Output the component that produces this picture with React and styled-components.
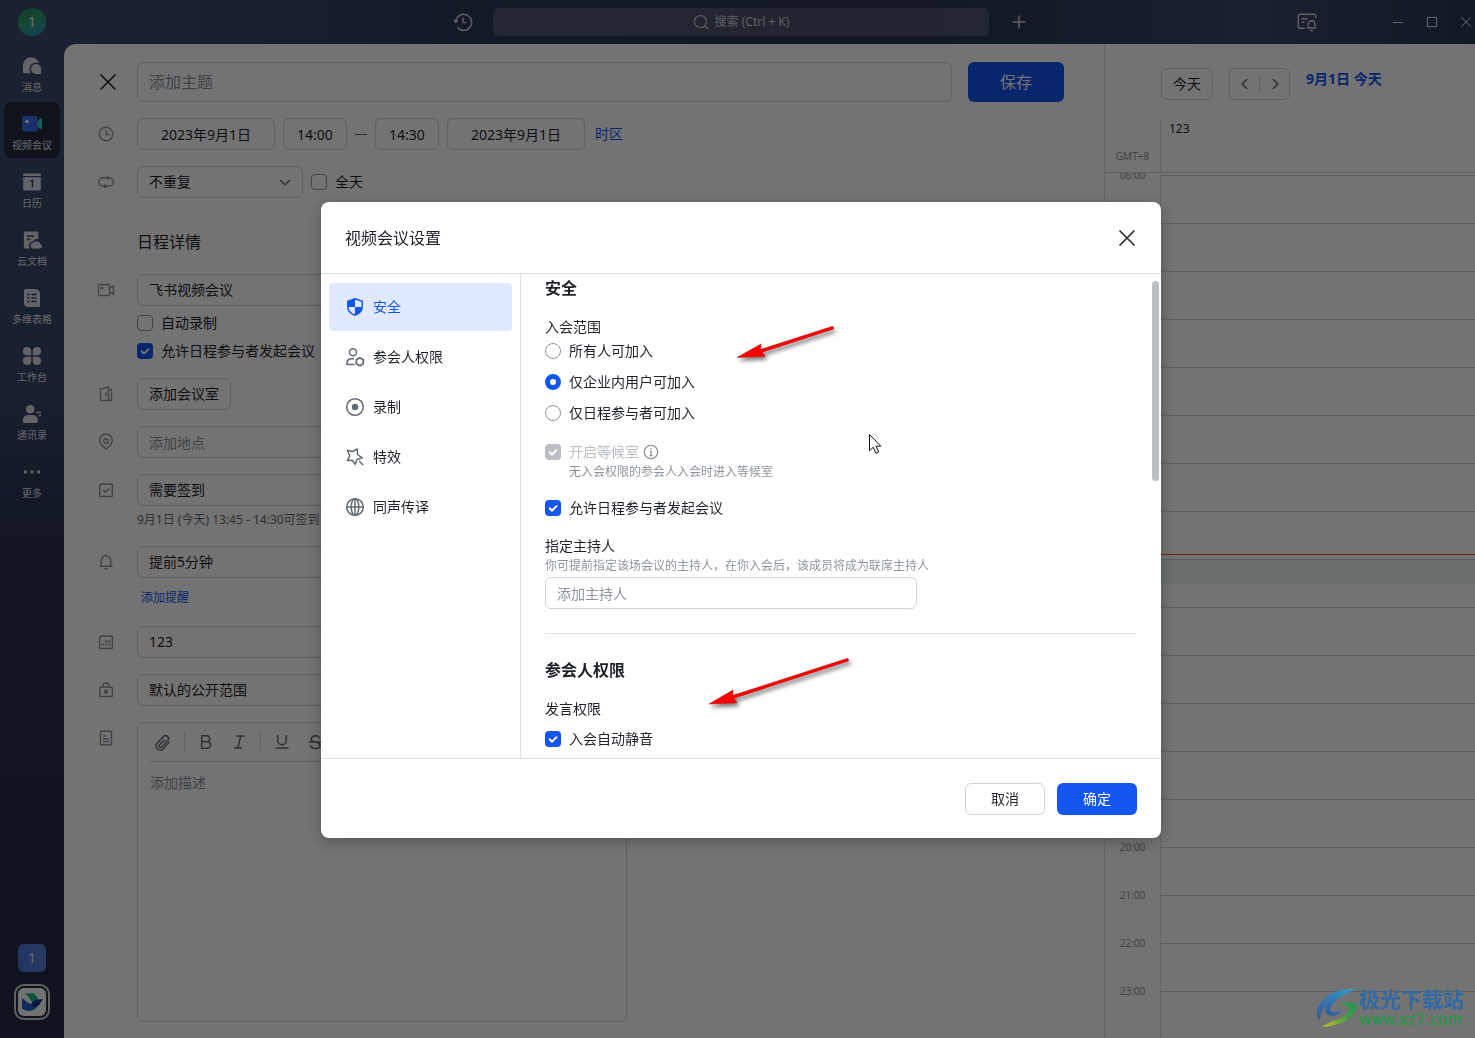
import React from "react";
import styled, { createGlobalStyle, css } from "styled-components";

const GlobalStyle = createGlobalStyle`
  * {
    box-sizing: border-box;
  }
  body {
    margin: 0;
    overflow: hidden;
  }
  body, button, input, select, textarea {
    font-family: "Noto Sans", "Noto Sans CJK SC", sans-serif;
    font-size: 14px;
    line-height: 22px;
    color: #1f2329;
  }
  button {
    padding: 0;
    border: none;
    background: none;
  }
  svg {
    display: block;
    flex: none;
  }
`;

const CHECK = `url("data:image/svg+xml,%3Csvg xmlns='http://www.w3.org/2000/svg' viewBox='0 0 16 16' fill='none' stroke='white' stroke-width='2'%3E%3Cpath d='M4.2 7.8l2.8 2.8 5-5'/%3E%3C/svg%3E")`;

/* shell */

const Shell = styled.div`
  height: 100vh;
  display: flex;
  flex-direction: column;
  background: #26314f;
`;

const Header = styled.header`
  height: 44px;
  flex: none;
  display: grid;
  grid-template-columns: 1fr minmax(0, 496px) 1fr;
  align-items: center;
  padding-left: 7px;
  background: linear-gradient(90deg, #3c4b6f 0%, #354465 20%, #2c3954 33%, #2a3550 62%, #3b4869 85%, #2b3652 100%);
`;

const HeaderLeft = styled.div`
  display: flex;
  align-items: center;
  justify-content: space-between;
  padding: 0 20px 0 11px;
`;

const HeaderRight = styled.div`
  display: flex;
  align-items: center;
  justify-content: space-between;
  padding: 0 1px 0 20px;
`;

const WindowTools = styled.div`
  display: flex;
  align-items: center;
  gap: 18px;
`;

const NoticeButton = styled.button`
  margin-right: 55px;
`;

const Avatar = styled.div`
  width: 28px;
  height: 28px;
  border-radius: 50%;
  display: flex;
  align-items: center;
  justify-content: center;
  color: #f0f2f5;
  background: linear-gradient(150deg, #2a8c4a 0%, #2f9f7a 50%, #2c90c4 100%);
`;

const SearchButton = styled.button`
  height: 28px;
  display: flex;
  align-items: center;
  justify-content: center;
  gap: 6px;
  border-radius: 6px;
  font-size: 12px;
  color: #cfd3db;
  background: rgba(255, 255, 255, 0.15);
`;

const Main = styled.div`
  flex: 1;
  min-height: 0;
  display: flex;
  background: linear-gradient(180deg, #3c4b6f 0%, #364566 35%, #27324c 50%, #222b43 100%);
`;

const SideBar = styled.nav`
  width: 64px;
  flex: none;
  display: flex;
  flex-direction: column;
  align-items: center;
  gap: 2px;
  padding-bottom: 18px;
`;

const SideItem = styled.button`
  width: 56px;
  height: 56px;
  flex: none;
  display: flex;
  flex-direction: column;
  align-items: center;
  gap: 4px;
  padding-top: 12px;
  border-radius: 8px;
  font-size: 10px;
  line-height: 14px;
  color: #e1e4eb;
  background: ${(props) => (props.$active ? "#242b3f" : "transparent")};
`;

const SideBottom = styled.div`
  margin-top: auto;
  display: flex;
  flex-direction: column;
  align-items: center;
  gap: 12px;
`;

const Tenant = styled.div`
  width: 28px;
  height: 28px;
  border-radius: 6px;
  display: flex;
  align-items: center;
  justify-content: center;
  color: #e8edf8;
  background: linear-gradient(90deg, #4a76dc, #5c83d8);
`;

const AppLogo = styled.div`
  width: 36px;
  height: 36px;
  padding: 2px;
  border: 2px solid #d5d7dc;
  border-radius: 10px;
`;

const LogoFace = styled.div`
  height: 28px;
  border-radius: 6px;
  background: #fafafa;
`;

const Page = styled.main`
  flex: 1;
  min-width: 0;
  display: flex;
  overflow: hidden;
  border-radius: 12px 0 0 0;
  background: #fff;
`;

/* event form */

const Form = styled.form`
  flex: 1;
  min-width: 0;
  display: flex;
  flex-direction: column;
  gap: 16px;
  padding: 18px 40px 16px 32px;
`;

const Row = styled.div`
  display: grid;
  grid-template-columns: 41px minmax(0, 1fr);
  ${(props) => props.$grow && "flex: 1; min-height: 0;"}
`;

const RowIcon = styled.div`
  height: ${(props) => (props.$tall ? "40px" : "32px")};
  display: flex;
  align-items: center;
  color: #8f959e;
`;

const Line = styled.div`
  display: flex;
  align-items: center;
  gap: ${(props) => props.$gap || "8px"};
`;

const Stack = styled.div`
  display: flex;
  flex-direction: column;
  align-items: flex-start;
  max-width: 490px;
`;

const boxStyle = css`
  height: 32px;
  border: 1px solid #d0d3d6;
  border-radius: 6px;
  background: #fff;
  padding: 0 11px;
  outline: none;
  &::placeholder {
    color: #8f959e;
  }
`;

const TextInput = styled.input`
  ${boxStyle}
  width: ${(props) => props.$width || "100%"};
`;

const CenterInput = styled(TextInput)`
  padding: 0;
  text-align: center;
`;

const TitleInput = styled(TextInput)`
  flex: 1;
  height: 40px;
  font-size: 16px;
`;

const SelectBox = styled.div`
  width: ${(props) => props.$width || "100%"};
  display: grid;
  align-items: center;
  & > * {
    grid-area: 1 / 1;
  }
  svg {
    justify-self: end;
    margin-right: 10px;
    color: #646a73;
    pointer-events: none;
  }
`;

const NativeSelect = styled.select`
  ${boxStyle}
  width: 100%;
  appearance: none;
`;

const OutlineButton = styled.button`
  ${boxStyle}
  ${(props) => props.$width && `width: ${props.$width}; padding: 0;`}
`;

const PrimaryButton = styled.button`
  width: ${(props) => (props.$large ? "96px" : "80px")};
  height: ${(props) => (props.$large ? "40px" : "32px")};
  border-radius: 6px;
  font-size: ${(props) => (props.$large ? "16px" : "14px")};
  color: #fff;
  background: #1456f0;
`;

const TextLink = styled.a`
  display: block;
  padding-left: 2px;
  font-size: ${(props) => (props.$small ? "12px" : "14px")};
  color: #1456f0;
  text-decoration: none;
`;

const SectionTitle = styled.h2`
  margin: 16px 0 4px 41px;
  font-size: 16px;
  line-height: 24px;
  font-weight: 400;
`;

const Dash = styled.span`
  width: 12px;
  height: 1px;
  background: #646a73;
`;

const Label = styled.label`
  display: flex;
  align-items: center;
  gap: 8px;
  color: ${(props) => (props.$muted ? "#bbbfc4" : "#1f2329")};
`;

const CheckInput = styled.input.attrs({ type: "checkbox" })`
  appearance: none;
  width: 16px;
  height: 16px;
  flex: none;
  margin: 0;
  border: 1px solid #8f959e;
  border-radius: 4px;
  background: #fff;
  &:checked {
    border: none;
    background: #1456f0 ${CHECK};
  }
  &:checked:disabled {
    background: #bbbfc4 ${CHECK};
  }
`;

const RadioInput = styled.input.attrs({ type: "radio" })`
  appearance: none;
  width: 16px;
  height: 16px;
  flex: none;
  margin: 0;
  border: 1px solid #8f959e;
  border-radius: 50%;
  background: #fff;
  &:checked {
    border: 5px solid #1456f0;
  }
`;

const FieldChecks = styled.div`
  display: flex;
  flex-direction: column;
  gap: 6px;
  margin-top: 6px;
`;

const FieldHint = styled.p`
  margin: 4px 0 0;
  font-size: 12px;
  line-height: 20px;
  white-space: nowrap;
  color: #646a73;
`;

const FieldExtra = styled.div`
  padding: 8px 0 0 2px;
  line-height: 24px;
`;

const Editor = styled.div`
  max-width: 490px;
  display: flex;
  flex-direction: column;
  border: 1px solid #d0d3d6;
  border-radius: 6px;
  padding: 0 12px;
`;

const EditorTools = styled.div`
  height: 39px;
  flex: none;
  display: flex;
  align-items: center;
  gap: 9px;
  padding-left: 1px;
  color: #646a73;
  border-bottom: 1px solid #d0d3d6;
`;

const ToolButton = styled.button`
  width: 24px;
  height: 24px;
  display: flex;
  align-items: center;
  justify-content: center;
  color: inherit;
`;

const Divider = styled.span`
  width: 1px;
  height: 18px;
  background: #d0d3d6;
`;

const EditorText = styled.textarea`
  flex: 1;
  padding: 10px 0;
  border: none;
  outline: none;
  resize: none;
  background: none;
  &::placeholder {
    color: #8f959e;
  }
`;

/* calendar */

const Calendar = styled.aside`
  width: 371px;
  flex: none;
  display: flex;
  flex-direction: column;
  border-left: 1px solid #dee0e3;
`;

const CalendarHead = styled.div`
  display: flex;
  gap: 16px;
  padding: 24px 0 18px 56px;
`;

const Pager = styled.div`
  width: 61px;
  height: 32px;
  display: flex;
  align-items: center;
  justify-content: space-evenly;
  border: 1px solid #d0d3d6;
  border-radius: 6px;
  button {
    color: #646a73;
  }
`;

const CalendarDate = styled.strong`
  color: #1456f0;
`;

const DayHead = styled.div`
  height: 55px;
  flex: none;
  display: grid;
  grid-template-columns: 55px 1fr;
  border-bottom: 1px solid #d0d3d6;
`;

const Zone = styled.span`
  align-self: end;
  padding-bottom: 8px;
  font-size: 10px;
  line-height: 16px;
  text-align: center;
  color: #8f959e;
`;

const DayName = styled.span`
  padding-left: 8px;
  font-size: 12px;
  border-left: 1px solid #dee0e3;
`;

const Hours = styled.div`
  flex: 1;
  min-height: 0;
  overflow: hidden;
`;

const Hour = styled.div`
  height: 48px;
  display: grid;
  grid-template-columns: 55px 1fr;
  &:first-child {
    height: 50px;
    padding-top: 2px;
  }
`;

const HourLabel = styled.span`
  margin-top: -8px;
  font-size: 10px;
  line-height: 16px;
  text-align: center;
  color: #8f959e;
`;

const HourCell = styled.div`
  position: relative;
  border-top: 1px solid #d0d3d6;
  border-left: 1px solid #dee0e3;
`;

const NowLine = styled.div`
  position: absolute;
  top: 42px;
  left: 0;
  right: 0;
  height: 1px;
  background: #f54a45;
`;

const Slot = styled.div`
  height: 24px;
  background: #ebf3ef;
`;

/* dialog */

const Mask = styled.div`
  position: fixed;
  inset: 0;
  display: flex;
  align-items: center;
  justify-content: center;
  padding: 2px 0 0 7px;
  background: rgba(0, 0, 0, 0.55);
`;

const Dialog = styled.section`
  position: relative;
  width: 840px;
  border-radius: 8px;
  background: #fff;
  box-shadow: 0 4px 16px rgba(0, 0, 0, 0.25);
`;

const DialogHead = styled.div`
  height: 72px;
  display: flex;
  align-items: center;
  justify-content: space-between;
  padding: 0 24px;
  border-bottom: 1px solid #dee0e3;
`;

const DialogTitle = styled.h1`
  margin: 0;
  font-size: 16px;
  line-height: 24px;
  font-weight: 400;
`;

const DialogBody = styled.div`
  height: 484px;
  display: flex;
`;

const Tabs = styled.nav`
  width: 200px;
  flex: none;
  display: flex;
  flex-direction: column;
  gap: 2px;
  padding: 9px 8px;
  border-right: 1px solid #dee0e3;
`;

const Tab = styled.button`
  height: 48px;
  display: flex;
  align-items: center;
  gap: 8px;
  padding-left: 16px;
  border-radius: 4px;
  color: ${(props) => (props.$active ? "#1456f0" : "#1f2329")};
  background: ${(props) => (props.$active ? "#e0e9ff" : "transparent")};
  svg {
    color: ${(props) => (props.$active ? "#1456f0" : "#646a73")};
  }
`;

const Settings = styled.div`
  position: relative;
  flex: 1;
  min-width: 0;
  overflow: hidden;
  padding: 2px 24px 0;
`;

const Group = styled.div`
  display: flex;
  flex-direction: column;
  gap: ${(props) => props.$gap || "0"};
  margin-top: ${(props) => props.$top || "16px"};
`;

const GroupTitle = styled.h2`
  margin: 0;
  font-size: 16px;
  line-height: 24px;
  font-weight: 700;
`;

const FieldName = styled.div`
  line-height: 22px;
`;

const Note = styled.p`
  margin: 0;
  padding-left: ${(props) => (props.$indent ? "24px" : "0")};
  font-size: 12px;
  line-height: 18px;
  color: #8f959e;
`;

const HostField = styled.div`
  padding: 2px 0 24px;
  margin-bottom: 24px;
  border-bottom: 1px solid #dee0e3;
`;

const ScrollThumb = styled.div`
  position: absolute;
  top: 7px;
  right: 2px;
  width: 7px;
  height: 200px;
  border-radius: 4px;
  background: #bbbfc4;
`;

const DialogFoot = styled.div`
  display: flex;
  justify-content: flex-end;
  gap: 12px;
  padding: 24px 24px 23px;
  border-top: 1px solid #dee0e3;
`;

const Marks = styled.svg`
  position: absolute;
  left: 380px;
  top: 116px;
  pointer-events: none;
`;

const Watermark = styled.div`
  position: fixed;
  right: 11px;
  bottom: 8px;
  display: flex;
  align-items: center;
`;

const WatermarkText = styled.div`
  display: flex;
  flex-direction: column;
`;

const WatermarkName = styled.span`
  font-size: 21px;
  line-height: 22px;
  font-weight: 700;
  color: #3069a3;
`;

const WatermarkSite = styled.span`
  font-family: "DejaVu Sans", sans-serif;
  font-size: 15px;
  line-height: 20px;
  color: #2f9450;
  text-shadow: 0 0 1px #2f9450;
`;

/* icons, all drawn on a 20px grid */

const Icon = ({ size = 20, width = 1.4, children }) => (
  <svg width={size} height={size} viewBox="0 0 20 20" fill="none" stroke="currentColor" strokeWidth={width}>
    {children}
  </svg>
);

const CloseIcon = ({ size = 20 }) => (
  <svg width={size} height={size} viewBox={`0 0 ${size} ${size}`} stroke="#2b2f36" strokeWidth="1.7">
    <path d={`M${size / 2 - 7.5} ${size / 2 - 7.5}l15 15m0-15l-15 15`} />
  </svg>
);

const sideItems = [
  {
    name: "消息",
    icon: (
      <>
        <path d="M1 9a8 8 0 1 1 8 8.200H2q-1 0-1-1Z" />
        <path d="M14 7.200a5.800 5.800 0 0 1 5.800 5.800v4.800q0 1-1 1H14a5.800 5.800 0 0 1 0-11.600Z" stroke="#394869" strokeWidth="1.600" />
      </>
    ),
  },
  {
    name: "视频会议",
    active: true,
    icon: (
      <>
        <rect x="0" y="2" width="15.5" height="15.5" rx="2" fill="#3b6cf0" />
        <circle cx="5" cy="7.5" r="1.8" fill="#fff" />
        <path d="M15.3 7.2 18 4.5q2-.6 2 1v8.600q0 1.600-2 1l-2.700-2.700Z" fill="#35d2bd" />
      </>
    ),
  },
  {
    name: "日历",
    icon: (
      <>
        <path d="M2 1.500h16q.8 0 .8.800V4H1.200V2.300q0-.8.800-.8ZM1.200 5.200h17.600v12q0 1.300-1.300 1.300h-15q-1.300 0-1.300-1.300Z" />
        <path d="M8.500 9.500 10.500 8.300V15.500" stroke="#33405f" strokeWidth="1.500" fill="none" />
      </>
    ),
  },
  {
    name: "云文档",
    icon: (
      <>
        <path d="M3.200 1.500h12q1.300 0 1.300 1.300v6q-3.500-.8-5.500 2.700-4 .3-4 4 0 2 1 3H3.200q-1.300 0-1.300-1.300V2.800q0-1.300 1.300-1.300Z" />
        <path d="M5 6h7M5 9.500h3.500" stroke="#33405f" strokeWidth="1.500" />
        <path d="M11.500 18.500a3 3 0 0 1 .3-6 3.700 3.700 0 0 1 6.400 1.500 2.300 2.300 0 0 1 0 4.500Z" />
      </>
    ),
  },
  {
    name: "多维表格",
    icon: (
      <>
        <path d="M3.500 1h9.500q5 .5 5 5v11.500q0 1.500-1.500 1.500H6q-4-.3-4-4V2.500Q2 1 3.500 1Z" />
        <path d="M5.200 6.500h2.300M9.500 6.500h5M5.200 10h2.300M9.500 10h5M5.200 13.500h2.300M9.500 13.500h5" stroke="#33405f" strokeWidth="1.600" />
      </>
    ),
  },
  {
    name: "工作台",
    icon: (
      <>
        <path d="M5 1a4 4 0 0 1 4.200 4v4.200H5A4.100 4.100 0 0 1 5 1ZM15 1a4.100 4.100 0 0 1 0 8.200h-4.200V5A4 4 0 0 1 15 1ZM5 10.800h4.200V15A4.100 4.100 0 1 1 5 10.800ZM10.800 10.800H15A4.100 4.100 0 1 1 10.800 15Z" />
      </>
    ),
  },
  {
    name: "通讯录",
    icon: (
      <>
        <circle cx="8.300" cy="5.300" r="4.300" />
        <path d="M.8 17.500q0-6.500 5-6.500h5q5 0 5 6.500 0 1.500-1.500 1.500h-12Q.8 19 .8 17.500Z" />
        <path d="M14 8.500h5M16.500 11.500h2.500" stroke="#d9dde6" strokeWidth="1.500" />
      </>
    ),
  },
  {
    name: "更多",
    icon: (
      <>
        <circle cx="3.500" cy="10" r="1.700" />
        <circle cx="10" cy="10" r="1.700" />
        <circle cx="16.500" cy="10" r="1.700" />
      </>
    ),
  },
];

const tabs = [
  {
    name: "安全",
    active: true,
    icon: (
      <>
        <path d="M10 1.800 17.200 4.200V10q0 5.600-7.200 8.300Q2.800 15.600 2.800 10V4.200Z" />
        <path d="M10 1.800V10H2.800V4.200ZM10 10h7.200q0 5.600-7.200 8.300Z" fill="currentColor" stroke="none" />
      </>
    ),
  },
  {
    name: "参会人权限",
    icon: (
      <>
        <circle cx="8" cy="5.300" r="3.500" />
        <path d="M9 11.700H6.500Q2 11.700 2 16v1.500h7.500" />
        <path d="m14.800 10.700 3.400 2v4l-3.400 2-3.400-2v-4Z" strokeLinejoin="round" strokeWidth="1.800" />
      </>
    ),
  },
  {
    name: "录制",
    icon: (
      <>
        <circle cx="10" cy="10" r="8.300" />
        <circle cx="10" cy="10" r="3.200" fill="currentColor" stroke="none" />
      </>
    ),
  },
  {
    name: "特效",
    icon: (
      <>
        <path d="m2.300 3.300 5.200 1.200L12.300 2l.2 5.500 4.700 3.300-5.200 1.700-1.700 4.800-3-4-5 .2 2.500-4.700Z" strokeLinejoin="round" />
        <path d="m14 14 4.200 4" />
      </>
    ),
  },
  {
    name: "同声传译",
    icon: (
      <>
        <circle cx="10" cy="10" r="8.300" />
        <ellipse cx="10" cy="10" rx="3.800" ry="8.300" />
        <path d="M1.700 10h16.600M10 1.700v16.600" />
      </>
    ),
  },
];

const hours = Array.from({ length: 18 }, (_, i) => i + 6);

function Select({ label, value, width }) {
  return (
    <SelectBox $width={width}>
      <NativeSelect aria-label={label} defaultValue={value}>
        <option>{value}</option>
      </NativeSelect>
      <Icon size={16} width={1.8}>
        <path d="m4 7.500 6 6 6-6" />
      </Icon>
    </SelectBox>
  );
}

function TopBar() {
  return (
    <Header>
      <HeaderLeft>
        <Avatar>1</Avatar>
        <button aria-label="历史记录">
          <svg width="20" height="20" viewBox="0 0 20 20" fill="none" stroke="#d0d4dc" strokeWidth="1.500">
            <path d="M2.700 9.500A8 8 0 1 1 4.500 15.500M1 8l1.700 2.300L5 8.500M10 5.500v5h3.500" />
          </svg>
        </button>
      </HeaderLeft>
      <SearchButton>
        <svg width="16" height="16" viewBox="0 0 16 16" fill="none" stroke="#cfd3db" strokeWidth="1.200">
          <circle cx="7.500" cy="7.500" r="6" />
          <path d="m12 12 3 3" />
        </svg>
        搜索 (Ctrl + K)
      </SearchButton>
      <HeaderRight>
        <button aria-label="新建">
          <svg width="20" height="20" viewBox="0 0 20 20" stroke="#d0d4dc" strokeWidth="1.500">
            <path d="M10 3.500v13M3.500 10h13" />
          </svg>
        </button>
        <WindowTools>
          <NoticeButton aria-label="通知">
            <svg width="20" height="20" viewBox="0 0 20 20" fill="none" stroke="#d0d4dc" strokeWidth="1.400">
              <path d="M8 16.300H3Q1.200 16.300 1.200 14.500V4Q1.200 2.200 3 2.200h14q1.800 0 1.800 1.800v2M4.500 6.800h6M4.500 10.300h3M9.800 16h9.400M11.200 16V11.500a3.400 3.400 0 0 1 6.700 0V16M13 18.500h3" />
            </svg>
          </NoticeButton>
          <button aria-label="最小化">
            <svg width="16" height="16" viewBox="0 0 16 16" stroke="#d8dbe2">
              <path d="M3 8.500h10" />
            </svg>
          </button>
          <button aria-label="最大化">
            <svg width="16" height="16" viewBox="0 0 16 16" fill="none" stroke="#d8dbe2">
              <rect x="3.500" y="3.500" width="9" height="9" />
            </svg>
          </button>
          <button aria-label="关闭窗口">
            <svg width="16" height="16" viewBox="0 0 16 16" stroke="#d8dbe2">
              <path d="m3 3 10 10m0-10-10 10" />
            </svg>
          </button>
        </WindowTools>
      </HeaderRight>
    </Header>
  );
}

function Side() {
  return (
    <SideBar>
      {sideItems.map((item) => (
        <SideItem key={item.name} $active={item.active}>
          <svg width="20" height="20" viewBox="0 0 20 20" fill="#d9dde6">
            {item.icon}
          </svg>
          {item.name}
        </SideItem>
      ))}
      <SideBottom>
        <Tenant>1</Tenant>
        <AppLogo>
          <LogoFace>
            <svg width="28" height="28" viewBox="0 0 28 28">
              <path d="M7 5.500h9q3 3 4 6l-5 4Q12 9.500 7 5.500Z" fill="#12b08c" />
              <path d="M4 10q5 5 10 6.500l6 .8Q17 23 11 23 7 23 4 20.500Z" fill="#1f63d0" />
              <path d="M12.500 17q4-6.500 12.500-5.500-2 2-3.500 5-3 4.500-9 .5Z" fill="#0f3585" />
            </svg>
          </LogoFace>
        </AppLogo>
      </SideBottom>
    </SideBar>
  );
}

function EventForm() {
  return (
    <Form onSubmit={(e) => e.preventDefault()}>
      <Row>
        <RowIcon $tall>
          <button type="button" aria-label="关闭">
            <CloseIcon size={24} />
          </button>
        </RowIcon>
        <Line $gap="16px">
          <TitleInput aria-label="主题" placeholder="添加主题" />
          <PrimaryButton $large>保存</PrimaryButton>
        </Line>
      </Row>
      <Row>
        <RowIcon>
          <Icon>
            <circle cx="10" cy="10" r="6.800" />
            <path d="M10 6v4.500h3.500" />
          </Icon>
        </RowIcon>
        <Line>
          <CenterInput aria-label="开始日期" $width="138px" defaultValue="2023年9月1日" />
          <CenterInput aria-label="开始时间" $width="64px" defaultValue="14:00" />
          <Dash />
          <CenterInput aria-label="结束时间" $width="64px" defaultValue="14:30" />
          <CenterInput aria-label="结束日期" $width="138px" defaultValue="2023年9月1日" />
          <TextLink href="#zone">时区</TextLink>
        </Line>
      </Row>
      <Row>
        <RowIcon>
          <Icon>
            <path d="M7 14.300A4.300 4.300 0 0 1 7 5.700h5.500M10.800 3.900l1.900 1.800-1.900 1.800M13 5.700a4.300 4.300 0 0 1 0 8.600H8M9.600 12.500 7.700 14.300l1.900 1.800" />
          </Icon>
        </RowIcon>
        <Line>
          <Select label="重复" value="不重复" width="166px" />
          <Label>
            <CheckInput />
            全天
          </Label>
        </Line>
      </Row>
      <SectionTitle>日程详情</SectionTitle>
      <Row>
        <RowIcon>
          <Icon>
            <rect x="2.500" y="4.500" width="11" height="11" rx=".8" />
            <path d="m13.500 8 4-2v8l-4-2" />
            <circle cx="6" cy="8" r=".8" fill="currentColor" />
          </Icon>
        </RowIcon>
        <Stack>
          <Select label="视频会议" value="飞书视频会议" />
          <FieldChecks>
            <Label>
              <CheckInput />
              自动录制
            </Label>
            <Label>
              <CheckInput defaultChecked />
              允许日程参与者发起会议
            </Label>
          </FieldChecks>
        </Stack>
      </Row>
      <Row>
        <RowIcon>
          <Icon>
            <path d="M12.500 16.500h-8V5l8-2ZM12.500 5.500h3v11h-3M9.800 8.500v3.500" />
          </Icon>
        </RowIcon>
        <Stack>
          <OutlineButton type="button">添加会议室</OutlineButton>
        </Stack>
      </Row>
      <Row>
        <RowIcon>
          <Icon>
            <path d="M10 17q-6.300-4.800-6.300-9a6.300 6 0 0 1 12.600 0q0 4.200-6.300 9Z" />
            <circle cx="10" cy="9" r="2.200" />
          </Icon>
        </RowIcon>
        <Stack>
          <TextInput aria-label="地点" placeholder="添加地点" />
        </Stack>
      </Row>
      <Row>
        <RowIcon>
          <Icon>
            <rect x="3.700" y="4.200" width="12.600" height="12.300" rx=".8" />
            <path d="M6.500 2.800v1.500M13.500 2.800v1.500M7.200 10l2.200 2.200 3.800-3.700" />
          </Icon>
        </RowIcon>
        <Stack>
          <Select label="签到" value="需要签到" />
          <FieldHint>9月1日 (今天) 13:45 - 14:30可签到</FieldHint>
        </Stack>
      </Row>
      <Row>
        <RowIcon>
          <Icon>
            <path d="M3.500 14.300h13M5.200 14V8.800a4.800 5 0 0 1 9.600 0V14M8.200 16.800h3.600M10 2.500v1.500" />
          </Icon>
        </RowIcon>
        <Stack>
          <Select label="提醒" value="提前5分钟" />
          <FieldExtra>
            <TextLink $small href="#remind">
              添加提醒
            </TextLink>
          </FieldExtra>
        </Stack>
      </Row>
      <Row>
        <RowIcon>
          <Icon>
            <rect x="3.700" y="4.200" width="12.600" height="12.300" rx=".8" />
            <path d="M6.500 2.800v1.500M13.500 2.800v1.500" />
            <path d="M9 9.200h2M12.200 9.200h2M5.800 12.600h2M9 12.600h2M12.200 12.600h2" strokeWidth="2" />
          </Icon>
        </RowIcon>
        <Stack>
          <Select label="日历" value="123" />
        </Stack>
      </Row>
      <Row>
        <RowIcon>
          <Icon>
            <rect x="3.700" y="7.200" width="12.600" height="9.300" rx=".8" />
            <path d="M7 7V5.500a3 2.500 0 0 1 6 0V7" />
            <circle cx="10" cy="11.800" r="1.500" fill="currentColor" />
          </Icon>
        </RowIcon>
        <Stack>
          <Select label="公开范围" value="默认的公开范围" />
        </Stack>
      </Row>
      <Row $grow>
        <RowIcon>
          <Icon>
            <rect x="4.500" y="3.200" width="11" height="13.600" rx=".6" />
            <path d="M7 8h3M7 10.800h6M7 13.500h6" />
          </Icon>
        </RowIcon>
        <Editor>
          <EditorTools>
            <ToolButton type="button" aria-label="附件">
              <Icon width={1.5}>
                <path d="m16.500 9-6.300 7a4 4 0 0 1-6-5.500l6.500-7a2.900 2.900 0 0 1 4.300 3.800l-6.200 6.900a1.500 1.500 0 0 1-2.300-2L11.500 7" transform="translate(0 .8)" />
              </Icon>
            </ToolButton>
            <Divider />
            <ToolButton type="button" aria-label="粗体">
              <Icon width={1.5}>
                <path d="M5.700 3.700h5a3 3 0 0 1 0 6h-5ZM5.700 9.700h5.500a3.300 3.300 0 0 1 0 6.600H5.700Z" />
              </Icon>
            </ToolButton>
            <ToolButton type="button" aria-label="斜体">
              <Icon width={1.5}>
                <path d="M7.500 4h8M5 16h8M11.700 4 8.800 16" />
              </Icon>
            </ToolButton>
            <Divider />
            <ToolButton type="button" aria-label="下划线">
              <Icon width={1.5}>
                <path d="M5.700 3v5.500a4.300 4.300 0 0 0 8.600 0V3M3.500 16h13" />
              </Icon>
            </ToolButton>
            <ToolButton type="button" aria-label="删除线">
              <Icon width={1.5}>
                <path d="M14.500 6.500Q14 3.700 10.500 3.700T6 7q0 2 4 3 5 1 5 3.500 0 3-4.500 3T5.500 13.200M3.500 10h13" />
              </Icon>
            </ToolButton>
          </EditorTools>
          <EditorText aria-label="描述" placeholder="添加描述" />
        </Editor>
      </Row>
    </Form>
  );
}

function DayCalendar() {
  return (
    <Calendar>
      <CalendarHead>
        <OutlineButton $width="52px">今天</OutlineButton>
        <Pager>
          <button aria-label="前一天">
            <Icon size={16} width={2}>
              <path d="m12.500 4-6 6 6 6" />
            </Icon>
          </button>
          <Divider />
          <button aria-label="后一天">
            <Icon size={16} width={2}>
              <path d="m7.500 4 6 6-6 6" />
            </Icon>
          </button>
        </Pager>
        <CalendarDate>9月1日 今天</CalendarDate>
      </CalendarHead>
      <DayHead>
        <Zone>GMT+8</Zone>
        <DayName>123</DayName>
      </DayHead>
      <Hours>
        {hours.map((hour) => (
          <Hour key={hour}>
            <HourLabel>{String(hour).padStart(2, "0")}:00</HourLabel>
            <HourCell>
              {hour === 13 && <NowLine />}
              {hour === 14 && <Slot />}
            </HourCell>
          </Hour>
        ))}
      </Hours>
    </Calendar>
  );
}

function MeetingSettings() {
  return (
    <Dialog role="dialog" aria-label="视频会议设置">
      <DialogHead>
        <DialogTitle>视频会议设置</DialogTitle>
        <button aria-label="关闭">
          <CloseIcon />
        </button>
      </DialogHead>
      <DialogBody>
        <Tabs>
          {tabs.map((tab) => (
            <Tab key={tab.name} $active={tab.active}>
              <Icon width={1.5}>{tab.icon}</Icon>
              {tab.name}
            </Tab>
          ))}
        </Tabs>
        <Settings>
          <GroupTitle>安全</GroupTitle>
          <Group>
            <FieldName>入会范围</FieldName>
          </Group>
          <Group $top="2px" $gap="9px">
            <Label>
              <RadioInput name="scope" />
              所有人可加入
            </Label>
            <Label>
              <RadioInput name="scope" defaultChecked />
              仅企业内用户可加入
            </Label>
            <Label>
              <RadioInput name="scope" />
              仅日程参与者可加入
            </Label>
          </Group>
          <Group $top="17px">
            <Line $gap="4px">
              <Label $muted>
                <CheckInput defaultChecked disabled />
                开启等候室
              </Label>
              <svg width="16" height="16" viewBox="0 0 16 16" fill="none" stroke="#8f959e" strokeWidth="1.300">
                <circle cx="8" cy="8" r="6.700" />
                <path d="M8 4v1.500M6.800 7.300H8v4M6.500 11.500h3" />
              </svg>
            </Line>
            <Note $indent>无入会权限的参会人入会时进入等候室</Note>
          </Group>
          <Group>
            <Label>
              <CheckInput defaultChecked />
              允许日程参与者发起会议
            </Label>
          </Group>
          <Group>
            <FieldName as="label" htmlFor="host">
              指定主持人
            </FieldName>
            <Note>你可提前指定该场会议的主持人，在你入会后，该成员将成为联席主持人</Note>
            <HostField>
              <TextInput id="host" $width="372px" placeholder="添加主持人" />
            </HostField>
          </Group>
          <GroupTitle>参会人权限</GroupTitle>
          <Group $gap="8px">
            <FieldName>发言权限</FieldName>
            <Label>
              <CheckInput defaultChecked />
              入会自动静音
            </Label>
          </Group>
          <ScrollThumb />
        </Settings>
      </DialogBody>
      <DialogFoot>
        <OutlineButton $width="80px">取消</OutlineButton>
        <PrimaryButton>确定</PrimaryButton>
      </DialogFoot>
      {/* arrows and pointer over the settings */}
      <Marks width="190" height="400" viewBox="0 0 190 400">
        <defs>
          <filter id="soft" x="-20%" y="-40%" width="140%" height="200%">
            <feDropShadow dx="2" dy="3" stdDeviation="2" floodColor="#000" floodOpacity="0.55" />
          </filter>
        </defs>
        <g fill="#f00" stroke="#a01010" strokeWidth=".5" filter="url(#soft)">
          <path d="M36 39.500 60 26l-.5 5.500L131 8.500q2 0 1.500 2.500L61 34.300l3 4Z" />
          <path d="M8 386 32 372l-.5 5.500L146 340.500q2 0 1.500 2.500L33 380.300l3 4.500Z" />
        </g>
        <path d="M168.500 116.500v16.300l3.700-3.500 2.800 6 2.700-1.300-2.700-5.800h4.800Z" fill="#fff" stroke="#111" />
      </Marks>
    </Dialog>
  );
}

function App() {
  return (
    <>
      <GlobalStyle />
      <Shell>
        <TopBar />
        <Main>
          <Side />
          <Page>
            <EventForm />
            <DayCalendar />
          </Page>
        </Main>
      </Shell>
      <Mask>
        <MeetingSettings />
      </Mask>
      <Watermark>
        <svg width="44" height="42" viewBox="0 0 44 42">
          <defs>
            <linearGradient id="swirlBlue" x1="0" y1="1" x2="1" y2="0">
              <stop offset="0" stopColor="#2f58a0" />
              <stop offset="1" stopColor="#3a9cc8" />
            </linearGradient>
            <linearGradient id="swirlGreen" x1="0" y1="1" x2="1" y2="0">
              <stop offset="0" stopColor="#c4c02a" />
              <stop offset=".6" stopColor="#3c9a48" />
              <stop offset="1" stopColor="#2a9058" />
            </linearGradient>
          </defs>
          <path d="M43 1Q20-1 8 12-3 24 5 33 4 24 13 15 24 6 43 1Z" fill="url(#swirlBlue)" />
          <path d="M37 3Q15 8 11 19q-2 9 7 9 8-1 7-7-3 4-8 3-4-2 1-8Q23 9 37 3Z" fill="url(#swirlBlue)" />
          <path d="M24 17q9-5 18-1 1 9-10 16-10 6-25 7 5-4 14-7 14-5 12-12-2-4-9-3Z" fill="url(#swirlGreen)" />
        </svg>
        <WatermarkText>
          <WatermarkName>极光下载站</WatermarkName>
          <WatermarkSite>www.xz7.com</WatermarkSite>
        </WatermarkText>
      </Watermark>
    </>
  );
}

export default App;
